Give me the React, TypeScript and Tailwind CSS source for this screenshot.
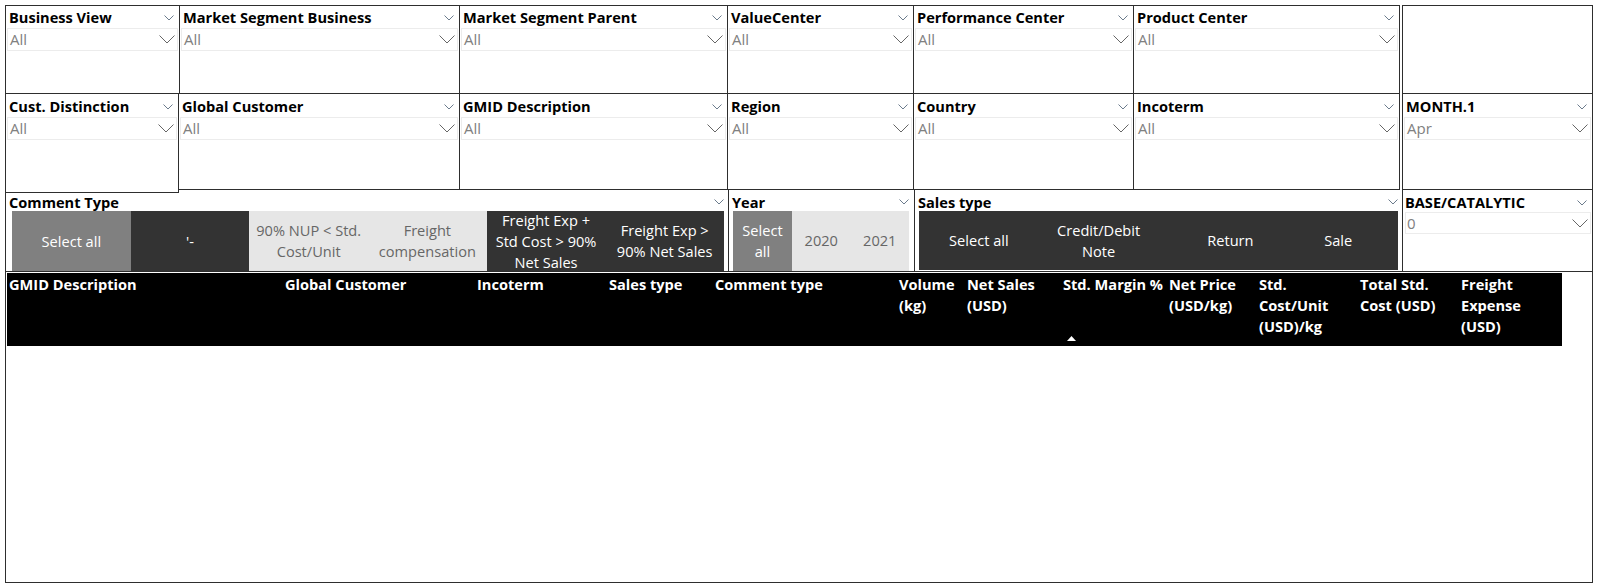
import React from 'react';

const font = "font-['Segoe_UI','Open_Sans',sans-serif]";

function SmallChev() {
  return (
    <svg width="10" height="6" viewBox="0 0 10 6" className="shrink-0">
      <polyline points="0.5,0.5 5,5 9.5,0.5" fill="none" stroke="#6b7b8c" strokeWidth="1" />
    </svg>
  );
}

function BigChev() {
  return (
    <svg width="16" height="9" viewBox="0 0 16 9" className="shrink-0">
      <polyline points="0.5,0.5 8,8 15.5,0.5" fill="none" stroke="#666" strokeWidth="1" />
    </svg>
  );
}

interface SlicerProps {
  title: string;
  value?: string;
  className: string;
  top?: boolean;
}

function Slicer({ title, value = 'All', className, top }: SlicerProps) {
  return (
    <div className={`flex flex-col border-[#2e2e2e] bg-white ${top ? 'border-y' : 'border-b'} ${className}`}>
      <div className={`flex items-center justify-between pl-[3px] pr-[5px] h-[22px] pt-[1px] ${top ? '' : 'mt-[1px]'}`}>
        <span className="text-[14.6px] font-bold text-black leading-none whitespace-nowrap">{title}</span>
        <SmallChev />
      </div>
      <div className="mx-[1px] h-[23px] border border-[#ececec] flex items-center justify-between pl-[2px] pr-[2px]">
        <span className="text-[15px] text-[#808080] leading-none">{value}</span>
        <BigChev />
      </div>
    </div>
  );
}

const row1 = [
  { title: 'Business View', w: 'w-[174px] border-l' },
  { title: 'Market Segment Business', w: 'w-[281px] border-r border-l' },
  { title: 'Market Segment Parent', w: 'w-[268px] border-r' },
  { title: 'ValueCenter', w: 'w-[186px] border-r' },
  { title: 'Performance Center', w: 'w-[220px] border-r' },
  { title: 'Product Center', w: 'w-[266px] border-r' },
];

const row2 = [
  { title: 'Cust. Distinction', w: 'w-[174px] border-l border-r -mb-[3px] relative z-10' },
  { title: 'Global Customer', w: 'w-[281px] border-r' },
  { title: 'GMID Description', w: 'w-[268px] border-r' },
  { title: 'Region', w: 'w-[186px] border-r' },
  { title: 'Country', w: 'w-[220px] border-r' },
  { title: 'Incoterm', w: 'w-[266px] border-r' },
];

const commentBtns: { label: React.ReactNode; tone: 'mid' | 'dark' | 'light' }[] = [
  { label: 'Select all', tone: 'mid' },
  { label: "'-", tone: 'dark' },
  { label: <>90% NUP &lt; Std.<br />Cost/Unit</>, tone: 'light' },
  { label: <>Freight<br />compensation</>, tone: 'light' },
  { label: <>Freight Exp +<br />Std Cost &gt; 90%<br />Net Sales</>, tone: 'dark' },
  { label: <>Freight Exp &gt;<br />90% Net Sales</>, tone: 'dark' },
];

const toneCls = {
  mid: 'bg-[#808080] text-white',
  dark: 'bg-[#333333] text-white',
  light: 'bg-[#e6e6e6] text-[#666]',
};

const columns: { label: React.ReactNode; w: string; sort?: boolean }[] = [
  { label: 'GMID Description', w: 'w-[276px]' },
  { label: 'Global Customer', w: 'w-[192px]' },
  { label: 'Incoterm', w: 'w-[132px]' },
  { label: 'Sales type', w: 'w-[106px]' },
  { label: 'Comment type', w: 'w-[184px]' },
  { label: <>Volume<br />(kg)</>, w: 'w-[68px]' },
  { label: <>Net Sales<br />(USD)</>, w: 'w-[96px]' },
  { label: 'Std. Margin %', w: 'w-[106px]', sort: true },
  { label: <>Net Price<br />(USD/kg)</>, w: 'w-[90px]' },
  { label: <>Std.<br />Cost/Unit<br />(USD)/kg</>, w: 'w-[101px]' },
  { label: <>Total Std.<br />Cost (USD)</>, w: 'w-[101px]' },
  { label: <>Freight<br />Expense<br />(USD)</>, w: 'w-[90px]' },
];

export default function App() {
  return (
    <div className={`w-[1601px] h-[584px] bg-white pl-[5px] pt-[5px] ${font}`}>
      {/* Row 1 */}
      <div className="flex h-[89px]">
        {row1.map((s) => (
          <Slicer key={s.title} title={s.title} className={s.w} top />
        ))}
        <div className="ml-[2px] w-[191px] border border-[#2e2e2e]" />
      </div>

      {/* Row 2 */}
      <div className="flex h-[96px]">
        {row2.map((s) => (
          <Slicer key={s.title} title={s.title} className={s.w} />
        ))}
        <Slicer title="MONTH.1" value="Apr" className="ml-[2px] w-[191px] border-x" />
      </div>

      {/* Row 3 */}
      <div className="flex h-[82px]">
        <div className="w-[723px] border-l border-b border-[#2e2e2e] flex flex-col pl-[6px] pr-[4px]">
          <div className="flex items-center justify-between h-[21px] -ml-[3px] pt-[3px]">
            <span className="text-[14.6px] font-bold leading-none">Comment Type</span>
            <SmallChev />
          </div>
          <div className="flex h-[60px] overflow-hidden">
            {commentBtns.map((b, i) => (
              <div key={i} className={`flex-1 flex items-center justify-center text-center text-[14.6px] leading-[21px] ${toneCls[b.tone]}`}>
                <span>{b.label}</span>
              </div>
            ))}
          </div>
        </div>

        <div className="w-[186px] border-l border-b border-[#2e2e2e] flex flex-col pl-[4px] pr-[5px]">
          <div className="flex items-center justify-between h-[21px] -ml-[1px] pt-[3px]">
            <span className="text-[14.6px] font-bold leading-none">Year</span>
            <SmallChev />
          </div>
          <div className="flex h-[60px] bg-[#e6e6e6] text-[14.6px]">
            <div className="w-[59px] bg-[#808080] text-white flex items-center justify-center text-center leading-[21px]">
              Select<br />all
            </div>
            <div className="flex-1 flex items-center justify-center text-[#666]">2020</div>
            <div className="flex-1 flex items-center justify-center text-[#666]">2021</div>
          </div>
        </div>

        <div className="w-[489px] border-x border-b border-[#2e2e2e] flex flex-col pl-[4px] pr-[4px]">
          <div className="flex items-center justify-between h-[21px] -ml-[1px] pt-[3px]">
            <span className="text-[14.6px] font-bold leading-none">Sales type</span>
            <SmallChev />
          </div>
          <div className="flex h-[59px] bg-[#333333] text-white text-[14.6px] leading-[21px]">
            <div className="flex-1 flex items-center justify-center">Select all</div>
            <div className="flex-1 flex items-center justify-center text-center">Credit/Debit<br />Note</div>
            <div className="flex-1 flex items-center justify-center">
              <span className="translate-x-[12px]">Return</span>
            </div>
            <div className="flex-1 flex items-center justify-center">Sale</div>
          </div>
        </div>

        <div className="w-[190px] border-r border-b border-[#2e2e2e] flex flex-col pl-[2px] pr-[1px]">
          <div className="flex items-center justify-between h-[22px] pr-[4px] pt-[3px]">
            <span className="text-[14.6px] font-bold leading-none">BASE/CATALYTIC</span>
            <SmallChev />
          </div>
          <div className="h-[22px] border border-[#ececec] flex items-center justify-between pl-[1px] pr-[2px]">
            <span className="text-[15px] text-[#808080] leading-none">0</span>
            <BigChev />
          </div>
        </div>
      </div>

      {/* Table */}
      <div className="w-[1588px] h-[311px] border-x border-b border-[#2e2e2e] pl-[1px] pt-[1px]">
        <div className="w-[1555px] h-[73px] bg-black flex pl-[2px] pt-[1px] text-white text-[14.6px] font-bold leading-[21px]">
          {columns.map((c, i) => (
            <div key={i} className={`relative shrink-0 h-full whitespace-nowrap ${c.w}`}>
              {c.label}
              {c.sort && (
                <svg width="9" height="5" viewBox="0 0 9 5" className="absolute left-[4px] bottom-[5px]">
                  <polygon points="0,5 4.5,0 9,5" fill="#fff" />
                </svg>
              )}
            </div>
          ))}
        </div>
      </div>
    </div>
  );
}
